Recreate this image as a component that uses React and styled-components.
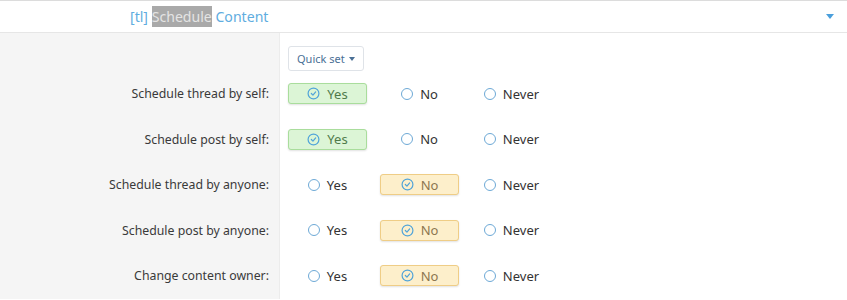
import React from "react";
import styled, { createGlobalStyle } from "styled-components";

const GlobalStyle = createGlobalStyle`
  body {
    margin: 0;
    background: #fff;
    font-family: "Noto Sans", "Open Sans", sans-serif;
    color: #333;
  }
`;

const rows = [
  { label: "Schedule thread by self:", value: "yes" },
  { label: "Schedule post by self:", value: "yes" },
  { label: "Schedule thread by anyone:", value: "no" },
  { label: "Schedule post by anyone:", value: "no" },
  { label: "Change content owner:", value: "no" },
];

const options = [
  { key: "yes", text: "Yes" },
  { key: "no", text: "No" },
  { key: "never", text: "Never" },
];

const CheckCircle = () => (
  <svg width="13" height="13" viewBox="0 0 24 24" fill="none" stroke="#4fa3d9" strokeWidth="2.2" strokeLinecap="round" strokeLinejoin="round">
    <circle cx="12" cy="12" r="10" />
    <path d="m8 12 3 3 5-6" />
  </svg>
);

const App = () => {
  return (
    <Page>
      <GlobalStyle />
      <Header>
        <Title>
          [tl] <Mark>Schedule</Mark> Content
        </Title>
        <Caret />
      </Header>
      <Form>
        <Row $first>
          <Label />
          <Value>
            <QuickSet>
              Quick set <SmallCaret />
            </QuickSet>
          </Value>
        </Row>
        {rows.map((row) => (
          <Row key={row.label}>
            <Label>{row.label}</Label>
            <Value>
              <Options>
                {options.map((opt) => {
                  const selected = opt.key === row.value;
                  return (
                    <Option key={opt.key} $selected={selected} $kind={opt.key}>
                      {selected ? <CheckCircle /> : <Radio />}
                      {opt.text}
                    </Option>
                  );
                })}
              </Options>
            </Value>
          </Row>
        ))}
      </Form>
    </Page>
  );
};
export default App;

const Page = styled.div`
  width: 847px;
  height: 300px;
  overflow: hidden;
  background: #fff;
`;

const Header = styled.div`
  display: flex;
  align-items: center;
  justify-content: space-between;
  height: 31px;
  padding: 0 13px 0 130px;
  border-top: 1px solid #dcdcdc;
  border-bottom: 1px solid #e6e6e6;
  background: #fff;
`;

const Title = styled.div`
  font-size: 14.1px;
  color: #5fade0;
  margin-top: -1px;
`;

const Mark = styled.span`
  background: #a9a9a9;
  color: #e4e4e4;
  padding: 1px 0;
`;

const Caret = styled.span`
  width: 0;
  height: 0;
  border-left: 4.5px solid transparent;
  border-right: 4.5px solid transparent;
  border-top: 5px solid #4a9fdc;
`;

const Form = styled.div`
  display: flex;
  flex-direction: column;
`;

const Row = styled.div`
  display: grid;
  grid-template-columns: 280px 1fr;
  min-height: ${(p) => (p.$first ? "38px" : "45.5px")};
`;

const Label = styled.div`
  display: flex;
  align-items: center;
  justify-content: flex-end;
  padding-right: 10px;
  background: #f5f5f5;
  border-right: 1px solid #ececec;
  font-size: 12.3px;
  color: #3a3a3a;
`;

const Value = styled.div`
  display: flex;
  align-items: center;
  padding-left: 8px;
`;

const QuickSet = styled.button`
  display: flex;
  align-items: center;
  gap: 4px;
  margin-top: 13px;
  height: 25px;
  padding: 0 8px;
  border: 1px solid #dfe3e8;
  border-radius: 3px;
  background: #fff;
  font-family: inherit;
  font-size: 11px;
  color: #4a6f95;
`;

const SmallCaret = styled.span`
  width: 0;
  height: 0;
  border-left: 3.5px solid transparent;
  border-right: 3.5px solid transparent;
  border-top: 4px solid #4a6f95;
`;

const Options = styled.div`
  display: flex;
  gap: 13px;
`;

const Option = styled.div`
  display: flex;
  align-items: center;
  justify-content: center;
  gap: 7px;
  flex: none;
  box-sizing: border-box;
  width: 79px;
  height: 21px;
  border-radius: 3px;
  font-size: 13px;
  color: #333;
  border: 1px solid transparent;
  white-space: nowrap;
  ${(p) =>
    p.$selected && p.$kind === "yes"
      ? `
    background: #dcf5d6;
    border-color: #a9dd9c;
    color: #4f7a4a;
    box-shadow: 0 1px 2px rgba(0,0,0,0.12);
  `
      : ""}
  ${(p) =>
    p.$selected && p.$kind === "no"
      ? `
    background: #fdefcb;
    border-color: #efcd86;
    color: #8c7650;
    box-shadow: 0 1px 2px rgba(0,0,0,0.12);
  `
      : ""}
`;

const Radio = styled.span`
  box-sizing: border-box;
  flex: none;
  width: 12px;
  height: 12px;
  border-radius: 50%;
  border: 1.5px solid #6da9d6;
`;
